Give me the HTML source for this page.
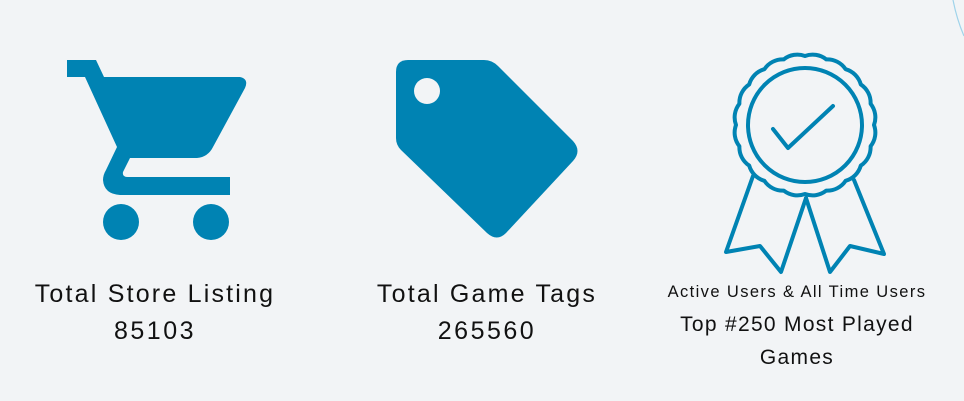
<!DOCTYPE html>
<html><head><style>
html,body{margin:0;padding:0;background:#f2f4f6;width:964px;height:401px;overflow:hidden;font-family:"Liberation Sans",sans-serif;color:#111;}
.t{position:absolute;text-align:center;white-space:nowrap;}
</style></head><body>
<svg width="964" height="401" style="position:absolute;left:0;top:0">
<path d="M953 0 Q957 20 964 36" fill="none" stroke="#9fd3ea" stroke-width="1.2"/>
<g fill="#0083b3">
<path d="M67 60 H96 L104 77 H240 Q249 79 245 88 L213 147 Q208 157 197 158 H130 L123 172 Q122 177 128 177 H230 V195 H120 Q104 194 103 180 Q103 175 106 170 L117 147 L85 77 H67 Z"/>
<circle cx="121" cy="222" r="18"/><circle cx="211" cy="222" r="18"/>
<path d="M408 60 H484 Q492 60 498 66 L573 141 Q582 151 573 161 L506 233 Q497 242 487 233 L401 150 Q396 145 396 138 V72 Q396 60 408 60 Z"/>
</g>
<circle cx="427" cy="91" r="13" fill="#f2f4f6"/>
<g fill="none" stroke="#0083b3" stroke-width="4" stroke-linejoin="round" stroke-linecap="round">
<path d="M874 125 A22 22 0 0 1 870.6 146.3 A22 22 0 0 1 860.8 165.6 A22 22 0 0 1 845.6 180.8 A22 22 0 0 1 826.3 190.6 A22 22 0 0 1 805 194 A22 22 0 0 1 783.7 190.6 A22 22 0 0 1 764.4 180.8 A22 22 0 0 1 749.2 165.6 A22 22 0 0 1 739.4 146.3 A22 22 0 0 1 736 125 A22 22 0 0 1 739.4 103.7 A22 22 0 0 1 749.2 84.4 A22 22 0 0 1 764.4 69.2 A22 22 0 0 1 783.7 59.4 A22 22 0 0 1 805 56 A22 22 0 0 1 826.3 59.4 A22 22 0 0 1 845.6 69.2 A22 22 0 0 1 860.8 84.4 A22 22 0 0 1 870.6 103.7 A22 22 0 0 1 874 125 Z"/>
<circle cx="805" cy="125" r="57"/>
<path d="M773 129 L788 148 L833 106"/>
<path d="M753 176 L726 252 L760 246 L781 272 L806 198"/>
<path d="M806 198 L830 272 L850 246 L884 254 L854 180"/>
</g>
</svg>
<div class="t" style="left:0;width:310px;top:280px;font-size:25px;letter-spacing:2.2px;">Total Store Listing</div>
<div class="t" style="left:0;width:310px;top:317px;font-size:25px;letter-spacing:2.5px;">85103</div>
<div class="t" style="left:332px;width:310px;top:280px;font-size:25px;letter-spacing:2.2px;">Total Game Tags</div>
<div class="t" style="left:332px;width:310px;top:317px;font-size:25px;letter-spacing:2.5px;">265560</div>
<div class="t" style="left:647px;width:300px;top:283px;font-size:16.5px;letter-spacing:1.4px;">Active Users &amp; All Time Users</div>
<div class="t" style="left:647px;width:300px;top:313px;font-size:21px;letter-spacing:1.3px;">Top #250 Most Played</div>
<div class="t" style="left:647px;width:300px;top:346px;font-size:21px;letter-spacing:1.3px;">Games</div>
</body></html>
